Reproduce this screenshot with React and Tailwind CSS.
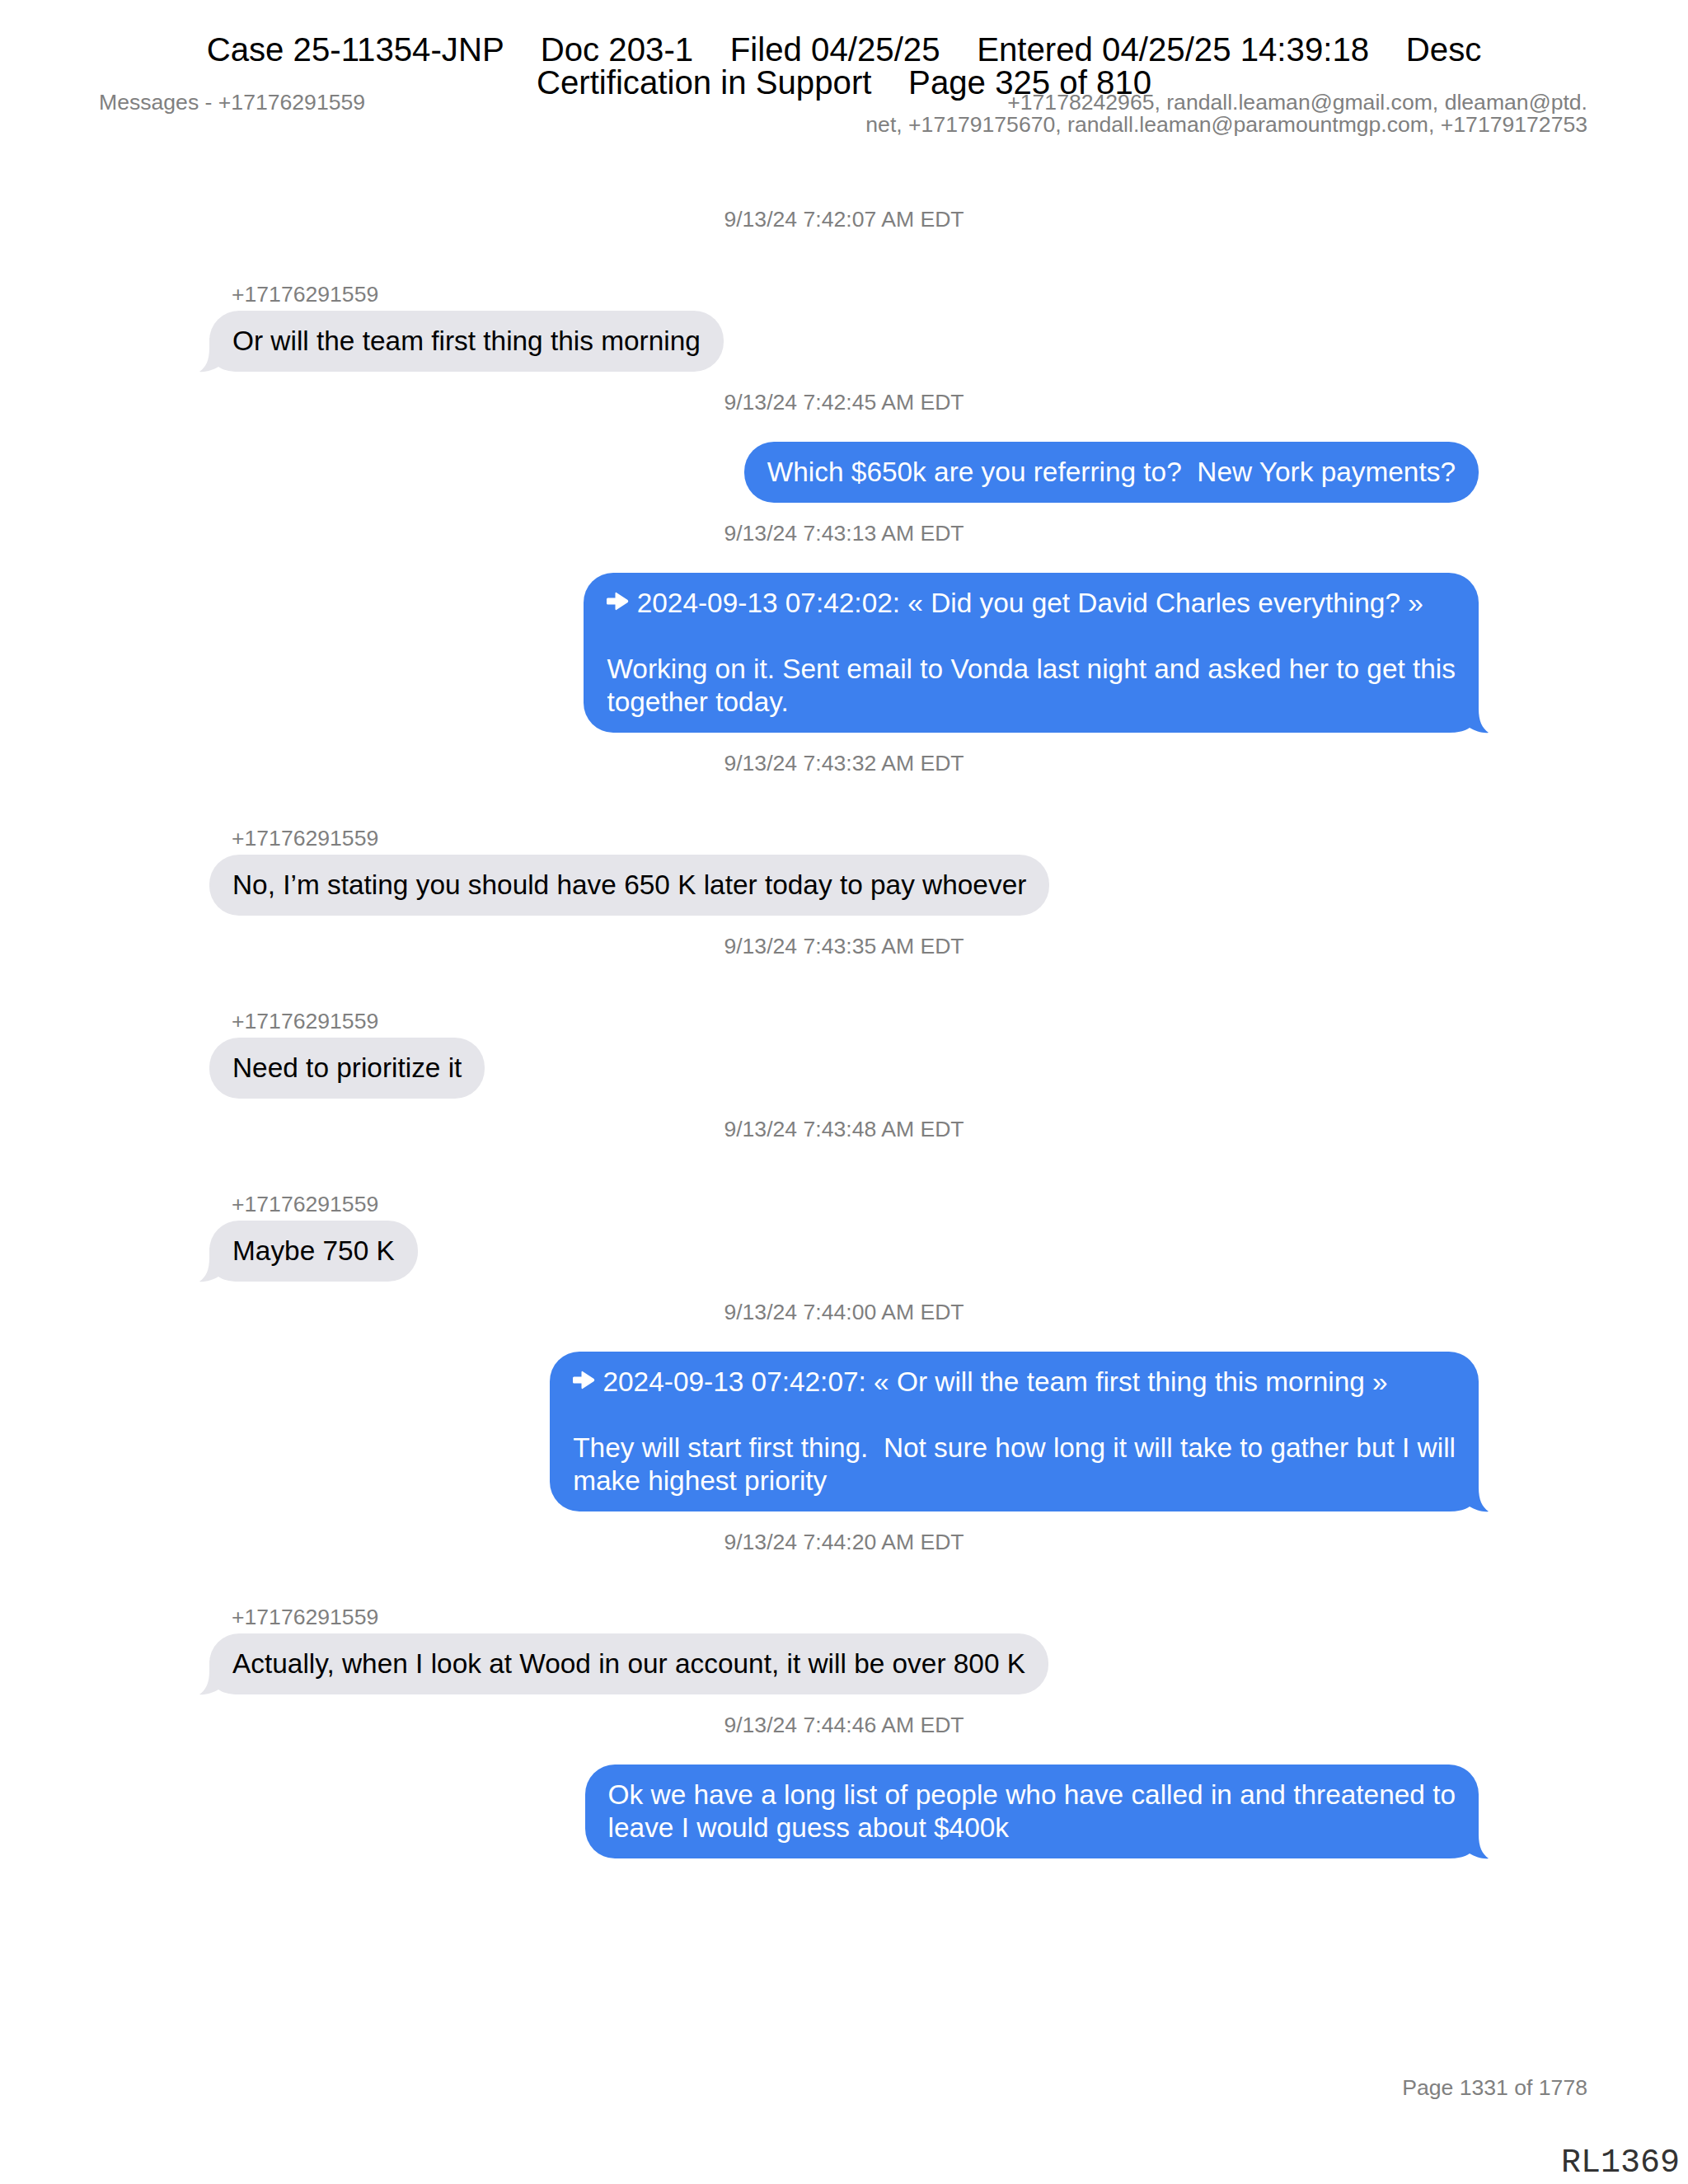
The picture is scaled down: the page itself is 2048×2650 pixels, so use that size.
import React from "react";

const SENDER = "+17176291559";

// line breaks kept as in the export so each bubble hugs its longest line
const MESSAGES = [
  {
    ts: "9/13/24 7:42:07 AM EDT",
    from: "them",
    text: "Or will the team first thing this morning",
    tail: true,
  },
  {
    ts: "9/13/24 7:42:45 AM EDT",
    from: "me",
    text: "Which $650k are you referring to?  New York payments?",
  },
  {
    ts: "9/13/24 7:43:13 AM EDT",
    from: "me",
    quote: "2024-09-13 07:42:02: « Did you get David Charles everything? »",
    text: "Working on it. Sent email to Vonda last night and asked her to get this\ntogether today.",
    tail: true,
  },
  {
    ts: "9/13/24 7:43:32 AM EDT",
    from: "them",
    text: "No, I’m stating you should have 650 K later today to pay whoever",
  },
  {
    ts: "9/13/24 7:43:35 AM EDT",
    from: "them",
    text: "Need to prioritize it",
  },
  {
    ts: "9/13/24 7:43:48 AM EDT",
    from: "them",
    text: "Maybe 750 K",
    tail: true,
  },
  {
    ts: "9/13/24 7:44:00 AM EDT",
    from: "me",
    quote: "2024-09-13 07:42:07: « Or will the team first thing this morning »",
    text: "They will start first thing.  Not sure how long it will take to gather but I will\nmake highest priority",
    tail: true,
  },
  {
    ts: "9/13/24 7:44:20 AM EDT",
    from: "them",
    text: "Actually, when I look at Wood in our account, it will be over 800 K",
    tail: true,
  },
  {
    ts: "9/13/24 7:44:46 AM EDT",
    from: "me",
    text: "Ok we have a long list of people who have called in and threatened to\nleave I would guess about $400k",
    tail: true,
  },
];

// iMessage style tail, drawn for the right side; mirrored for the left
const Tail = ({ mine }) => (
  <svg
    width="48"
    height="41"
    viewBox="0 0 48 41"
    className={
      mine
        ? "absolute bottom-0 -right-[12px] overflow-visible"
        : "absolute bottom-0 -left-[12px] -scale-x-100 overflow-visible"
    }
  >
    <path
      d="M0 0 H36 V12 C36 27 40 35 48 41 C41 42 32 39 25 35 C20 38.5 13 41 0 41 Z"
      fill={mine ? "#3d80ee" : "#e5e5ea"}
    />
  </svg>
);

const ReplyArrow = () => (
  <svg width="27" height="23" viewBox="0 0 27 23" className="inline-block align-[2px]">
    <path
      d="M1.5 7.5 H10.5 V2.2 Q10.5 0 12.6 1.4 L25.6 10 Q27 11.5 25.6 13 L12.6 21.6 Q10.5 23 10.5 20.8 V15.5 H1.5 Q0 15.5 0 14 V9 Q0 7.5 1.5 7.5 Z"
      fill="white"
    />
  </svg>
);

const Bubble = ({ msg }) => {
  const mine = msg.from === "me";
  return (
    <div className={mine ? "flex justify-end" : "flex justify-start"}>
      <div
        className={
          mine
            ? "relative rounded-[36px] bg-[#3d80ee] px-[28px] py-[17px] text-[33.4px] leading-[40px] text-white whitespace-pre"
            : "relative rounded-[36px] bg-[#e5e5ea] px-[28px] py-[17px] text-[33.4px] leading-[40px] text-black whitespace-pre"
        }
      >
        {msg.tail && <Tail mine={mine} />}
        {msg.quote && (
          <>
            <div className="relative">
              <ReplyArrow /> {msg.quote}
            </div>
            <div className="h-[40px]" />
          </>
        )}
        <div className="relative">{msg.text}</div>
      </div>
    </div>
  );
};

const MessageBlock = ({ msg, first }) => (
  <div className={first ? "" : "mt-[21px]"}>
    <p className="text-center text-[26.6px] leading-[32px] text-[#7f7f7f]">{msg.ts}</p>
    {msg.from === "them" ? (
      <>
        <p className="mt-[59px] pl-[27px] text-[26.6px] leading-[32px] text-[#7f7f7f]">{SENDER}</p>
        <div className="mt-[4px]">
          <Bubble msg={msg} />
        </div>
      </>
    ) : (
      <div className="mt-[32px]">
        <Bubble msg={msg} />
      </div>
    )}
  </div>
);

export default function App() {
  return (
    <div className="relative flex h-[2650px] w-[2048px] flex-col bg-white font-['Liberation_Sans','DejaVu_Sans',sans-serif]">
      {/* court filing stamp, printed over the page */}
      <div className="absolute left-0 right-0 top-[41px] z-10 whitespace-pre text-center text-[40.2px] leading-[40px] text-black">
        <p>Case 25-11354-JNP    Doc 203-1    Filed 04/25/25    Entered 04/25/25 14:39:18    Desc</p>
        <p>Certification in Support    Page 325 of 810</p>
      </div>

      {/* export header */}
      <div className="flex items-start justify-between pl-[120px] pr-[122px] pt-[111px] text-[26.6px] leading-[27px] text-[#808080]">
        <p>Messages - +17176291559</p>
        <div className="text-right">
          <p>+17178242965, randall.leaman@gmail.com, dleaman@ptd.</p>
          <p>net, +17179175670, randall.leaman@paramountmgp.com, +17179172753</p>
        </div>
      </div>

      {/* conversation */}
      <div className="mt-[85px] px-[254px]">
        {MESSAGES.map((msg, i) => (
          <MessageBlock key={i} msg={msg} first={i === 0} />
        ))}
      </div>

      {/* footer */}
      <div className="mt-auto pb-[5px]">
        <p className="pr-[122px] text-right text-[26.6px] leading-[27px] text-[#808080]">Page 1331 of 1778</p>
        <p className="mt-[58px] pr-[10px] text-right font-['Liberation_Mono',monospace] text-[40px] leading-[40px] text-[#333]">
          RL1369
        </p>
      </div>
    </div>
  );
}
